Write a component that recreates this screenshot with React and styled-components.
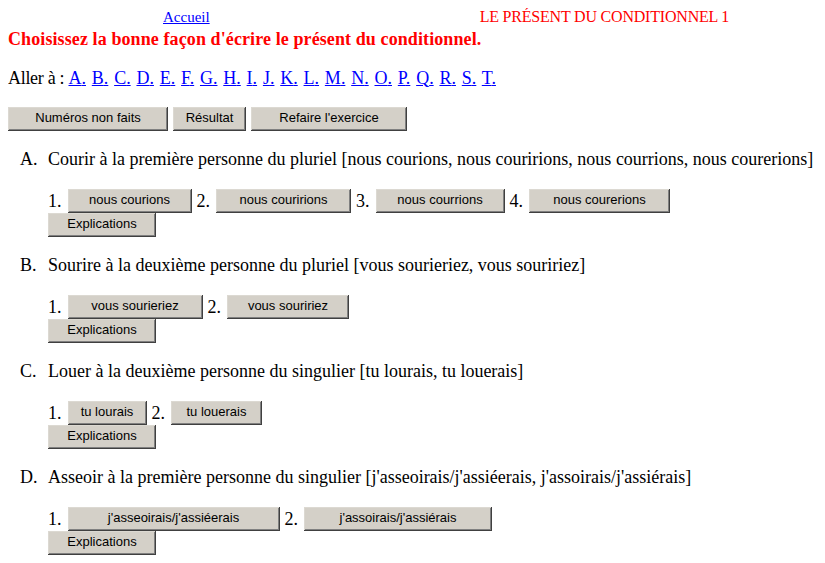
import React from "react";
import styled, { createGlobalStyle } from "styled-components";

const GlobalStyle = createGlobalStyle`
  body {
    margin: 8px;
    background: #ffffff;
    font-family: "Liberation Serif", "Times New Roman", serif;
    font-size: 18px;
    color: #000000;
  }
`;

const TopBar = styled.div`
  display: flex;
  align-items: baseline;
  height: 21px;
  line-height: 18px;
  font-size: 15px;
`;

const HomeLink = styled.a`
  margin-left: 155px;
  color: #0000ff;
  text-decoration: underline;
`;

const PageTitle = styled.span`
  margin-left: 270px;
  font-size: 16px;
  letter-spacing: -0.2px;
  color: #ff0000;
`;

const Heading = styled.div`
  font-size: 18px;
  font-weight: bold;
  letter-spacing: 0.1px;
  color: #ff0000;
  line-height: 21px;
`;

const JumpLine = styled.div`
  margin-top: 18px;
  line-height: 21px;
`;

const JumpLabel = styled.span`
  letter-spacing: -0.3px;
`;

const JumpLinks = styled.span`
  word-spacing: 1.3px;
`;

const JumpLink = styled.a`
  color: #0000ff;
  text-decoration: underline;
`;

const Toolbar = styled.div`
  display: flex;
  gap: 5px;
  margin-top: 18px;
`;

const Button = styled.button`
  box-sizing: border-box;
  width: ${(p) => p.$w}px;
  height: 24px;
  padding: 0 0 3px;
  background: #d4d0c8;
  border: none;
  box-shadow: inset -1px -1px #404040, inset 1px 1px #dcd9d2,
    inset -2px -2px #808080;
  font-family: "Liberation Sans", Arial, sans-serif;
  font-size: 13px;
  color: #000000;
  cursor: pointer;
`;

const QuestionList = styled.ol`
  list-style: none;
  margin: 18px 0 0;
  padding: 0;
`;

const Question = styled.li`
  display: grid;
  grid-template-columns: 28px 1fr;
  margin-left: 12px;
  margin-bottom: 18px;
`;

const Letter = styled.span`
  line-height: 21px;
`;

const Body = styled.div`
  display: flex;
  flex-direction: column;
  align-items: flex-start;
`;

const Prompt = styled.div`
  line-height: 21px;
`;

const Answers = styled.div`
  display: flex;
  align-items: flex-end;
  margin-top: 19px;
`;

const Num = styled.span`
  line-height: 21px;
  margin-bottom: 1px;
  margin-right: 6px;
`;

const Choice = styled(Button)`
  margin-right: 5px;
`;

const letters = "ABCDEFGHIJKLMNOPQRST".split("");

const questions = [
  {
    id: "A",
    text: "Courir à la première personne du pluriel [nous courions, nous couririons, nous courrions, nous courerions]",
    choices: [
      ["nous courions", 124],
      ["nous couririons", 135],
      ["nous courrions", 129],
      ["nous courerions", 141],
    ],
  },
  {
    id: "B",
    text: "Sourire à la deuxième personne du pluriel [vous sourieriez, vous souririez]",
    choices: [
      ["vous sourieriez", 135],
      ["vous souririez", 122],
    ],
  },
  {
    id: "C",
    text: "Louer à la deuxième personne du singulier [tu lourais, tu louerais]",
    choices: [
      ["tu lourais", 79],
      ["tu louerais", 91],
    ],
  },
  {
    id: "D",
    text: "Asseoir à la première personne du singulier [j'asseoirais/j'assiéerais, j'assoirais/j'assiérais]",
    choices: [
      ["j'asseoirais/j'assiéerais", 212],
      ["j'assoirais/j'assiérais", 188],
    ],
  },
];

const App = () => {
  return (
    <>
      <GlobalStyle />
      <TopBar>
        <HomeLink href="#">Accueil</HomeLink>
        <PageTitle>LE PRÉSENT DU CONDITIONNEL 1</PageTitle>
      </TopBar>
      <Heading>Choisissez la bonne façon d'écrire le présent du conditionnel.</Heading>
      <JumpLine>
        <JumpLabel>Aller à : </JumpLabel>
        <JumpLinks>
          {letters.map((l) => (
            <React.Fragment key={l}>
              <JumpLink href={"#" + l}>{l}.</JumpLink>{" "}
            </React.Fragment>
          ))}
        </JumpLinks>
      </JumpLine>
      <Toolbar>
        <Button $w={160}>Numéros non faits</Button>
        <Button $w={73}>Résultat</Button>
        <Button $w={156}>Refaire l'exercice</Button>
      </Toolbar>
      <QuestionList>
        {questions.map((q) => (
          <Question key={q.id} id={q.id}>
            <Letter>{q.id}.</Letter>
            <Body>
              <Prompt>{q.text}</Prompt>
              <Answers>
                {q.choices.map(([label, w], i) => (
                  <React.Fragment key={label}>
                    <Num>{i + 1}.</Num>
                    <Choice $w={w}>{label}</Choice>
                  </React.Fragment>
                ))}
              </Answers>
              <Button $w={108}>Explications</Button>
            </Body>
          </Question>
        ))}
      </QuestionList>
    </>
  );
};

export default App;
